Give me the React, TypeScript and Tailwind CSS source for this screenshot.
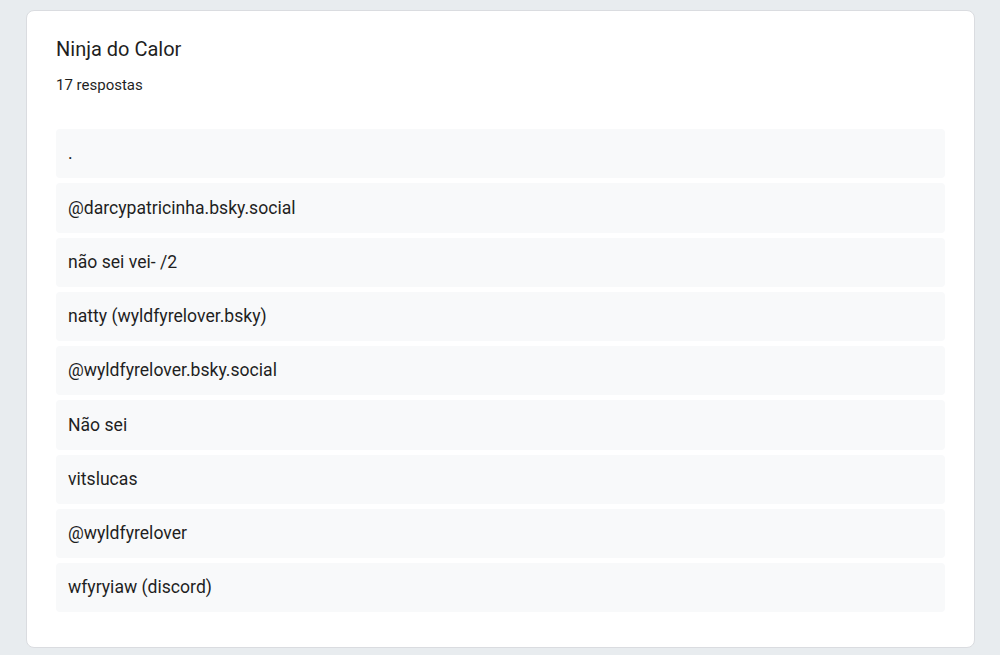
const answers = [
  ".",
  "@darcypatricinha.bsky.social",
  "não sei vei- /2",
  "natty (wyldfyrelover.bsky)",
  "@wyldfyrelover.bsky.social",
  "Não sei",
  "vitslucas",
  "@wyldfyrelover",
  "wfyryiaw (discord)",
];

export default function App() {
  return (
    <div className="h-[655px] w-[1000px] overflow-hidden bg-[#e8ecef] pl-[26px] pr-[25px] pt-[10px] font-['Roboto',sans-serif] text-[#1f1f1f]">
      <div className="rounded-lg border border-[#dadce0] bg-white px-[29px] pb-[35px] pt-[24px]">
        <h1 className="text-[20px] leading-[28px]">Ninja do Calor</h1>
        <p className="mt-[12px] text-[15px] leading-[20px]">17 respostas</p>
        <div className="mt-[34px] flex flex-col gap-[5px]">
          {answers.map((a, i) => (
            <div key={i} className="flex h-[49.25px] items-center rounded bg-[#f8f9fa] px-3 text-[17.6px]">
              {a}
            </div>
          ))}
        </div>
      </div>
    </div>
  );
}
